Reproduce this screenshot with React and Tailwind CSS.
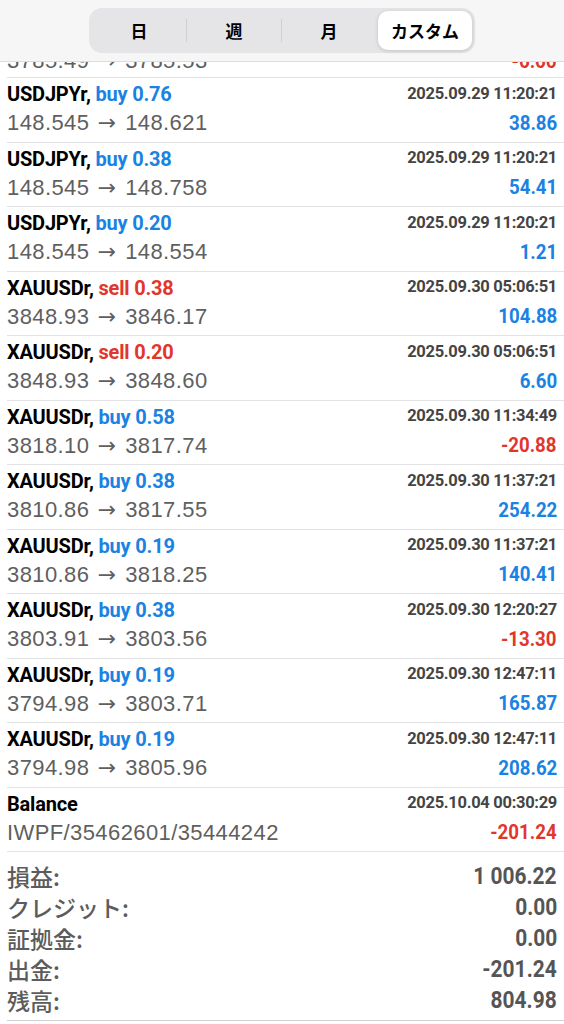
import React from 'react';

const bold = { fontFamily: 'Roboto, "Liberation Sans", sans-serif' };
const reg = { fontFamily: '"Liberation Sans", Arial, sans-serif' };
const arrow = { fontFamily: '"DejaVu Sans", sans-serif' };
const jp = { fontFamily: '"Noto Sans CJK JP", "Noto Sans", sans-serif' };

const deals = [
  ['USDJPYr', 'buy', '0.76', '2025.09.29 11:20:21', '148.545', '148.621', '38.86'],
  ['USDJPYr', 'buy', '0.38', '2025.09.29 11:20:21', '148.545', '148.758', '54.41'],
  ['USDJPYr', 'buy', '0.20', '2025.09.29 11:20:21', '148.545', '148.554', '1.21'],
  ['XAUUSDr', 'sell', '0.38', '2025.09.30 05:06:51', '3848.93', '3846.17', '104.88'],
  ['XAUUSDr', 'sell', '0.20', '2025.09.30 05:06:51', '3848.93', '3848.60', '6.60'],
  ['XAUUSDr', 'buy', '0.58', '2025.09.30 11:34:49', '3818.10', '3817.74', '-20.88'],
  ['XAUUSDr', 'buy', '0.38', '2025.09.30 11:37:21', '3810.86', '3817.55', '254.22'],
  ['XAUUSDr', 'buy', '0.19', '2025.09.30 11:37:21', '3810.86', '3818.25', '140.41'],
  ['XAUUSDr', 'buy', '0.38', '2025.09.30 12:20:27', '3803.91', '3803.56', '-13.30'],
  ['XAUUSDr', 'buy', '0.19', '2025.09.30 12:47:11', '3794.98', '3803.71', '165.87'],
  ['XAUUSDr', 'buy', '0.19', '2025.09.30 12:47:11', '3794.98', '3805.96', '208.62'],
];

const summary = [
  ['損益:', '1 006.22'],
  ['クレジット:', '0.00'],
  ['証拠金:', '0.00'],
  ['出金:', '-201.24'],
  ['残高:', '804.98'],
];

function Prices({ from, to }) {
  return (
    <div style={reg} className="text-[22px] tracking-[0.4px] text-[#5f5f5f] leading-none whitespace-nowrap">
      {to ? (
        <>
          {from} <span style={arrow} className="mx-[2px]">→</span> {to}
        </>
      ) : (
        from
      )}
    </div>
  );
}

function Profit({ value }) {
  const neg = value.startsWith('-');
  return (
    <div
      style={bold}
      className={`inline-block origin-right scale-x-[0.89] whitespace-nowrap text-[21px] font-bold leading-none ${neg ? 'text-[#e0372c]' : 'text-[#1a82e2]'}`}
    >
      {value}
    </div>
  );
}

function Row({ title, side, lot, time, from, to, profit }) {
  return (
    <div className="ml-[7px] h-[64.5px] border-b border-[#e2e2e4] pr-[7px] pt-[3px]">
      <div className="flex items-center justify-between h-[26px]">
        <div style={bold} className="whitespace-nowrap text-[20px] font-bold text-black leading-none tracking-[-0.2px]">
          {title}
          {side && (
            <span className={side === 'sell' ? 'text-[#e0372c]' : 'text-[#1a82e2]'}> {side} {lot}</span>
          )}
        </div>
        <div style={bold} className="whitespace-nowrap text-[16.5px] font-bold text-[#444444] leading-none tracking-[-0.3px]">{time}</div>
      </div>
      <div className="flex items-center justify-between h-[26px] mt-[3px]">
        <Prices from={from} to={to} />
        <Profit value={profit} />
      </div>
    </div>
  );
}

export default function App() {
  return (
    <div className="w-[564px] h-[1024px] overflow-hidden bg-white">
      {/* segmented header */}
      <div className="h-[62px] bg-[#f6f6f6] border-b border-[#dcdcdc] flex items-start justify-center pt-[8px]">
        <div style={jp} className="w-[386px] h-[45px] rounded-[13px] bg-[#e5e5e7] p-[3px] flex items-stretch text-[17px] font-bold text-black">
          <div className="flex-1 flex items-center justify-center">日</div>
          <div className="w-px my-[8px] bg-[#cfcfd2]" />
          <div className="flex-1 flex items-center justify-center">週</div>
          <div className="w-px my-[8px] bg-[#cfcfd2]" />
          <div className="flex-1 flex items-center justify-center">月</div>
          <div className="flex-1 flex items-center justify-center ml-[2px] rounded-[10px] bg-white shadow-[0_1px_4px_rgba(0,0,0,0.15)]">カスタム</div>
        </div>
      </div>

      {/* partially scrolled row */}
      <div className="ml-[7px] h-[16px] overflow-hidden border-b border-[#e2e2e4] pr-[7px] flex items-end">
        <div className="flex w-full items-center justify-between h-[26px] mb-[3px] shrink-0">
          <Prices from="3785.49" to="3785.53" />
          <Profit value="-6.66" />
        </div>
      </div>

      {deals.map((d, i) => (
        <Row key={i} title={d[0] + ','} side={d[1]} lot={d[2]} time={d[3]} from={d[4]} to={d[5]} profit={d[6]} />
      ))}

      <Row title="Balance" time="2025.10.04 00:30:29" from="IWPF/35462601/35444242" profit="-201.24" />

      <div className="ml-[7px] pr-[7px] pt-[9px] pb-[4px] border-b border-[#d0d0d0]">
        {summary.map(([label, value]) => (
          <div key={label} className="flex items-center justify-between h-[31px]">
            <div style={jp} className="text-[23px] font-medium text-[#5c5c5c] leading-none">{label}</div>
            <div style={bold} className="inline-block origin-right scale-x-[0.91] whitespace-nowrap text-[23px] font-bold text-[#555555] leading-none">{value}</div>
          </div>
        ))}
      </div>
    </div>
  );
}
